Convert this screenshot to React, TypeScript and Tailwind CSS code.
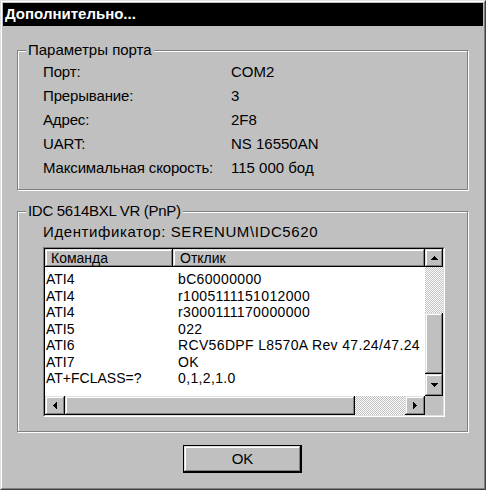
import React from "react";

const raised =
  "bg-[#c0c0c0] shadow-[inset_-1px_-1px_#000,inset_1px_1px_#dfdfdf,inset_-2px_-2px_#808080,inset_2px_2px_#fff]";
const dither =
  "[background-image:repeating-conic-gradient(#c0c0c0_0_25%,#fff_0_50%)] [background-size:2px_2px]";

function Arrow({ dir }: { dir: "up" | "down" | "left" | "right" }) {
  const pts =
    dir === "up"
      ? "3.5,0 7,4 0,4"
      : dir === "down"
      ? "0,0 7,0 3.5,4"
      : dir === "left"
      ? "4,0 4,7 0,3.5"
      : "0,0 4,3.5 0,7";
  const w = dir === "up" || dir === "down" ? 7 : 4;
  const h = dir === "up" || dir === "down" ? 4 : 7;
  return (
    <svg width={w} height={h} viewBox={`0 0 ${w} ${h}`} shapeRendering="crispEdges">
      <polygon points={pts} fill="#000" />
    </svg>
  );
}

function Group({
  label,
  className,
  children,
}: {
  label: string;
  className?: string;
  children: React.ReactNode;
}) {
  return (
    <div
      className={`relative border border-[#808080] shadow-[1px_1px_0_#fff,inset_1px_1px_0_#fff] ${className ?? ""}`}
    >
      <span className="absolute left-[8px] -top-[10px] bg-[#c0c0c0] px-[2px] leading-[18px] whitespace-nowrap">
        {label}
      </span>
      {children}
    </div>
  );
}

const params: [string, string][] = [
  ["Порт:", "COM2"],
  ["Прерывание:", "3"],
  ["Адрес:", "2F8"],
  ["UART:", "NS 16550AN"],
  ["Максимальная скорость:", "115 000 бод"],
];

const rows: [string, string][] = [
  ["ATI4", "bC60000000"],
  ["ATI4", "r1005111151012000"],
  ["ATI4", "r3000111170000000"],
  ["ATI5", "022"],
  ["ATI6", "RCV56DPF L8570A Rev 47.24/47.24"],
  ["ATI7", "OK"],
  ["AT+FCLASS=?", "0,1,2,1.0"],
];

export default function App() {
  return (
    <div className="w-[486px] h-[490px] bg-[#c0c0c0] border border-t-[#dfdfdf] border-l-[#dfdfdf] border-r-[#404040] border-b-[#404040] font-['Liberation_Sans',Arial,sans-serif] text-[15px] text-black">
      <div className="h-full border border-t-white border-l-white border-r-[#808080] border-b-[#808080] p-px flex flex-col">
        <div className="h-[23px] bg-black text-white font-bold text-[15px] pl-[2px] flex items-center">
          Дополнительно...
        </div>
        <div className="flex flex-col pl-[14px] pr-[15px] pt-[24px]">
          <Group label="Параметры порта" className="h-[140px]">
            <div className="pt-[9px] pl-[25px] grid grid-cols-[188px_1fr] leading-[24px]">
              {params.map(([k, v]) => (
                <React.Fragment key={k}>
                  <div className="tracking-[-0.15px]">{k}</div>
                  <div>{v}</div>
                </React.Fragment>
              ))}
            </div>
          </Group>
          <Group label="IDC 5614BXL VR (PnP)" className="h-[221px] mt-[21px] tracking-[-0.3px]">
            <div className="pt-[11px] pl-[25px] flex flex-col tracking-normal">
              <div className="leading-[18px] tracking-[0.6px]">Идентификатор: SERENUM\IDC5620</div>
              <div className="mt-[6px] w-[402px] h-[170px] border border-t-[#808080] border-l-[#808080] border-r-white border-b-white">
                <div className="h-full border border-t-black border-l-black border-r-[#dfdfdf] border-b-[#dfdfdf] bg-white flex flex-col">
                  <div className="flex h-[147px]">
                    <div className="w-[380px] flex flex-col text-[14px]">
                      <div className="flex h-[18px] leading-[18px]">
                        <div className={`w-[128px] pl-[6px] ${raised}`}>Команда</div>
                        <div className={`flex-1 pl-[7px] ${raised}`}>Отклик</div>
                      </div>
                      <div className="pt-[4px] flex flex-col">
                        {rows.map(([c, r], i) => (
                          <div key={i} className="flex h-[16.5px] leading-[16.5px] whitespace-nowrap">
                            <div className="w-[133px] pl-[1px]">{c}</div>
                            <div className="tracking-[0.35px]">{r}</div>
                          </div>
                        ))}
                      </div>
                    </div>
                    <div className="w-[18px] flex flex-col">
                      <div className={`h-[18px] flex items-center justify-center ${raised}`}>
                        <Arrow dir="up" />
                      </div>
                      <div className={`h-[46px] ${dither}`} />
                      <div className={`h-[61px] ${raised}`} />
                      <div className={`h-[22px] flex items-center justify-center ${raised}`}>
                        <Arrow dir="down" />
                      </div>
                    </div>
                  </div>
                  <div className="flex h-[19px]">
                    <div className={`w-[20px] flex items-center justify-center ${raised}`}>
                      <Arrow dir="left" />
                    </div>
                    <div className={`w-[290px] ${raised}`} />
                    <div className={`w-[50px] ${dither}`} />
                    <div className={`w-[20px] flex items-center justify-center ${raised}`}>
                      <Arrow dir="right" />
                    </div>
                    <div className="flex-1 bg-[#c0c0c0]" />
                  </div>
                </div>
              </div>
            </div>
          </Group>
          <div className="mt-[13px] self-center w-[119px] h-[28px] border border-black">
            <div className={`h-full flex items-center justify-center ${raised}`}>OK</div>
          </div>
        </div>
      </div>
    </div>
  );
}
